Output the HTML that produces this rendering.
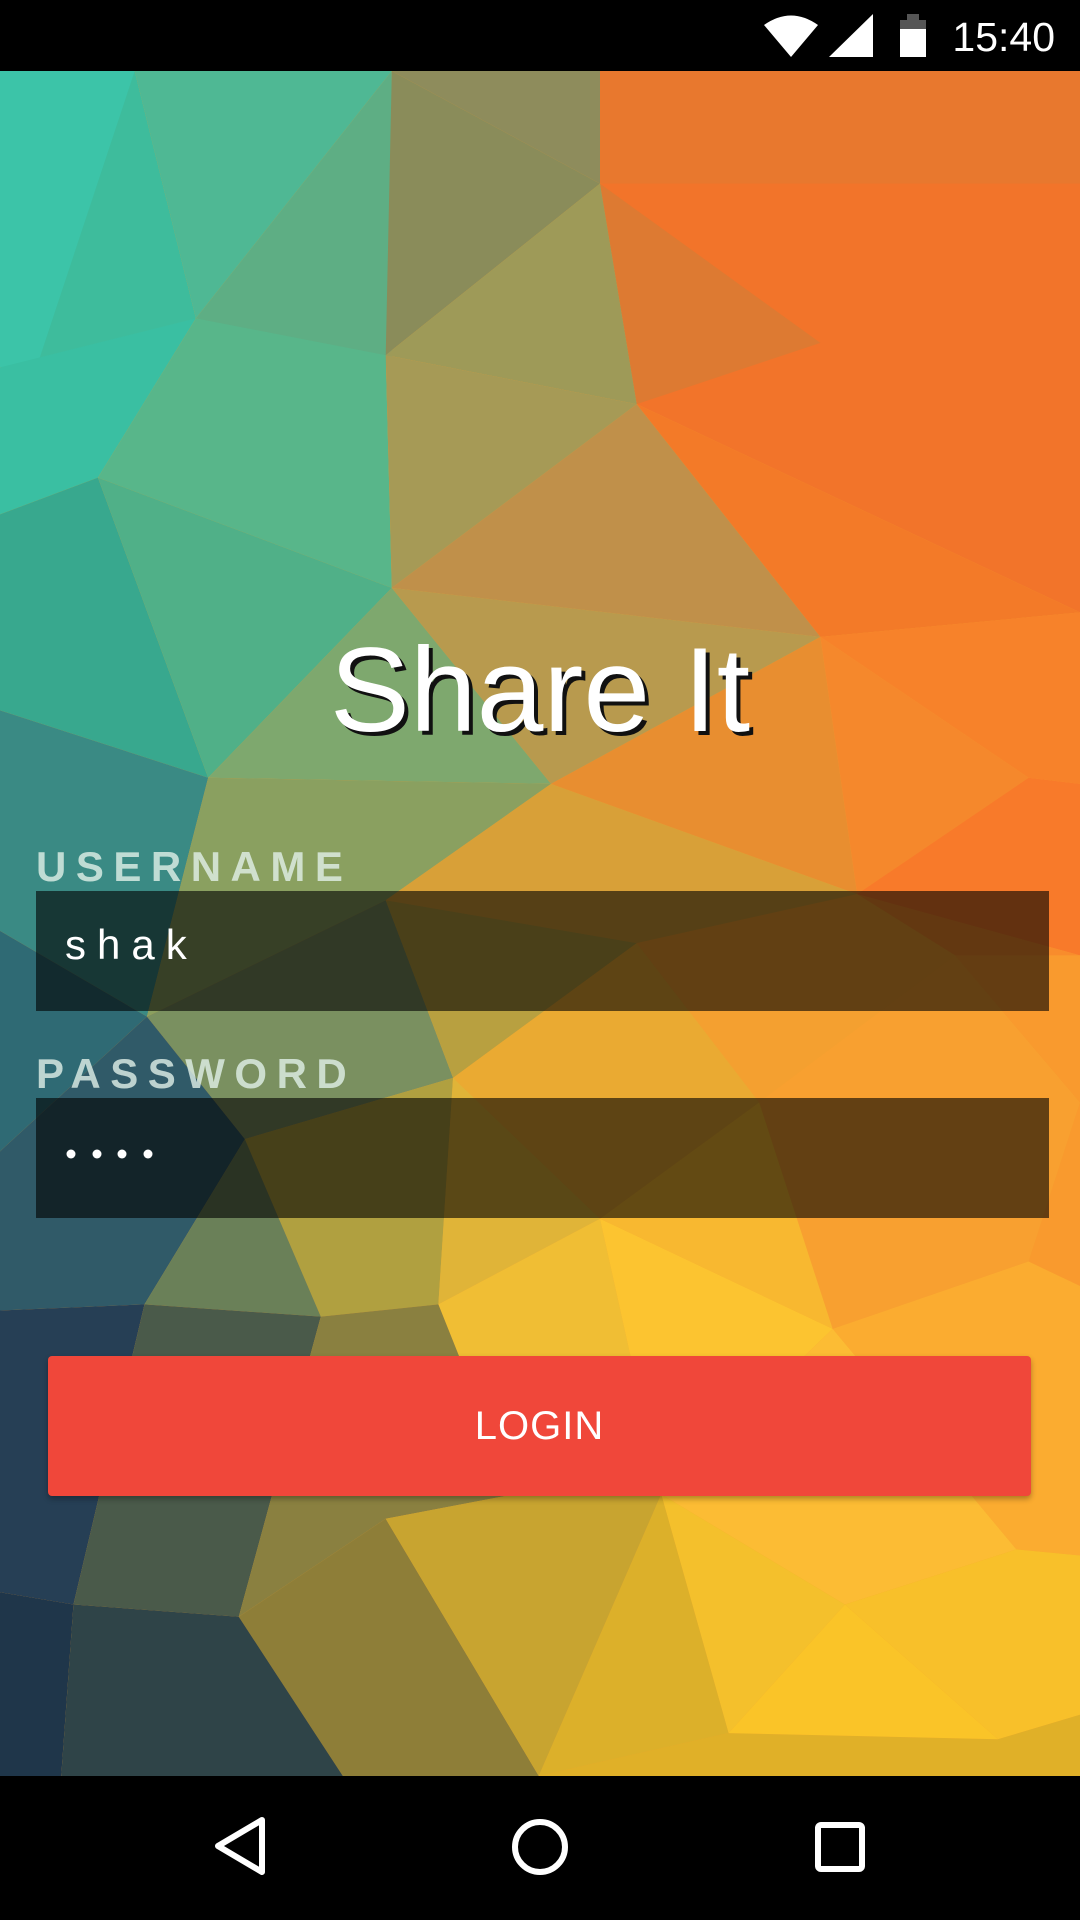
<!DOCTYPE html>
<html><head><meta charset="utf-8"><style>
html,body{margin:0;padding:0;width:1080px;height:1920px;overflow:hidden;background:#000;font-family:"Liberation Sans",sans-serif}
.abs{position:absolute}
.lbl{position:absolute;left:36px;font-weight:bold;font-size:42px;letter-spacing:9.5px;color:rgba(225,240,232,0.8);line-height:1}
.inp{position:absolute;left:36px;width:1013px;height:120px;background:rgba(0,0,0,0.6)}
</style></head><body>
<div class="abs" style="left:0;top:0;width:1080px;height:72px;background:#000"></div>
<svg class="abs" style="left:0;top:0" width="1080" height="72">
<path d="M764 25 Q791 6 818 25 L791 57 Z" fill="#fff"/>
<path d="M829 57 L873 14 L873 57 Z" fill="#fff"/>
<rect x="900" y="20" width="26" height="37" fill="#fff"/>
<rect x="900" y="20" width="26" height="9" fill="#555"/>
<rect x="907" y="14" width="12" height="6" fill="#555"/>
<text x="1055" y="51" text-anchor="end" font-family="Liberation Sans" font-size="41" fill="#fff">15:40</text>
</svg>
<svg class="abs" style="left:0;top:71px" width="1080" height="1705" viewBox="0 58 882 1392" preserveAspectRatio="none">
<rect x="0" y="58" width="882" height="1392" fill="#f5a030"/>
<polygon points="0,58 110,58 110,300 0,300" fill="#3cc4a8"/>
<polygon points="110,58 320,58 160,260" fill="#4fb894"/>
<polygon points="110,58 160,260 0,390" fill="#3ebc9c"/>
<polygon points="320,58 160,260 320,300" fill="#5eae84"/>
<polygon points="320,58 490,58 490,150" fill="#8e8c5c"/>
<polygon points="320,58 490,150 315,290" fill="#8a8c5a"/>
<polygon points="490,58 882,58 882,200 490,150" fill="#e8782e"/>
<polygon points="490,150 882,150 882,500 520,330" fill="#f2742a"/>
<polygon points="490,150 520,330 670,280" fill="#dd7a32"/>
<polygon points="315,290 490,150 520,330" fill="#9e9a58"/>
<polygon points="0,300 160,260 80,390 0,420" fill="#3abfa2"/>
<polygon points="160,260 315,290 320,480 80,390" fill="#58b68a"/>
<polygon points="315,290 520,330 320,480" fill="#a69a56"/>
<polygon points="520,330 670,520 320,480" fill="#c0904a"/>
<polygon points="520,330 882,500 670,520" fill="#f37a28"/>
<polygon points="0,420 80,390 170,635 0,580" fill="#38a88e"/>
<polygon points="80,390 320,480 170,635" fill="#50b088"/>
<polygon points="320,480 450,640 170,635" fill="#7ea86e"/>
<polygon points="320,480 670,520 450,640" fill="#b89a4e"/>
<polygon points="670,520 882,500 882,640 840,635" fill="#f7822a"/>
<polygon points="450,640 670,520 700,730" fill="#e88e30"/>
<polygon points="670,520 840,635 700,730" fill="#f5882c"/>
<polygon points="840,635 882,640 882,780 700,730" fill="#f87a2a"/>
<polygon points="0,580 170,635 120,830 0,760" fill="#3a8a84"/>
<polygon points="170,635 450,640 315,735 120,830" fill="#8aa060"/>
<polygon points="315,735 450,640 700,730 520,770" fill="#d8a038"/>
<polygon points="700,730 882,780 882,900 780,780" fill="#f88c2c"/>
<polygon points="520,770 700,730 780,780 620,900" fill="#f4a030"/>
<polygon points="0,760 120,830 0,940" fill="#2f6a74"/>
<polygon points="120,830 315,735 370,880 200,930" fill="#7a9060"/>
<polygon points="315,735 520,770 370,880" fill="#b8a040"/>
<polygon points="520,770 620,900 490,995 370,880" fill="#eaaa32"/>
<polygon points="620,900 780,780 882,900 840,1030 680,1085" fill="#f8a030"/>
<polygon points="780,780 882,780 882,1050 840,1030 882,900" fill="#f99a2e"/>
<polygon points="490,995 620,900 680,1085" fill="#f8b830"/>
<polygon points="0,940 120,830 200,930 118,1065 0,1070" fill="#305a68"/>
<polygon points="200,930 370,880 358,1065 262,1075" fill="#b0a040"/>
<polygon points="200,930 262,1075 118,1065" fill="#6a8058"/>
<polygon points="370,880 490,995 358,1065" fill="#e0b438"/>
<polygon points="358,1065 490,995 540,1220 420,1220" fill="#f0be34"/>
<polygon points="490,995 680,1085 540,1220" fill="#fcc430"/>
<polygon points="680,1085 840,1030 882,1050 882,1270 830,1265" fill="#fbac30"/>
<polygon points="540,1220 680,1085 830,1265 690,1310" fill="#fcbc34"/>
<polygon points="0,1070 118,1065 60,1310 0,1300" fill="#263f55"/>
<polygon points="118,1065 262,1075 195,1320 60,1310" fill="#4a5a4a"/>
<polygon points="262,1075 358,1065 420,1220 315,1240 195,1320" fill="#8a8040"/>
<polygon points="195,1320 315,1240 440,1450 280,1450" fill="#8e7e38"/>
<polygon points="315,1240 420,1220 540,1220 440,1450" fill="#c8a430"/>
<polygon points="540,1220 690,1310 595,1415" fill="#f4c02c"/>
<polygon points="690,1310 830,1265 882,1270 882,1400 815,1420" fill="#f8c02a"/>
<polygon points="540,1220 595,1415 440,1450" fill="#dcb02a"/>
<polygon points="595,1415 815,1420 882,1400 882,1450 440,1450" fill="#e0b028"/>
<polygon points="690,1310 815,1420 595,1415" fill="#fac428"/>
<polygon points="0,1300 60,1310 50,1450 0,1450" fill="#1f364a"/>
<polygon points="60,1310 195,1320 280,1450 50,1450" fill="#2f4448"/>
</svg>
<div class="abs" style="left:0;top:630px;width:1080px;text-align:center;font-size:120px;color:#fff;line-height:1;text-shadow:4px 4px 0 #111">Share It</div>
<div class="lbl" style="top:846px">USERNAME</div>
<div class="inp" style="top:891px"></div>
<div class="abs" style="left:65px;top:924px;font-size:42px;letter-spacing:11px;color:#fff;line-height:1">shak</div>
<div class="lbl" style="top:1053px">PASSWORD</div>
<div class="inp" style="top:1098px"></div>
<svg class="abs" style="left:0;top:1140px" width="200" height="30"><g fill="#fff"><circle cx="71" cy="14" r="4.5"/><circle cx="97" cy="14" r="4.5"/><circle cx="122" cy="14" r="4.5"/><circle cx="148" cy="14" r="4.5"/></g></svg>
<div class="abs" style="left:48px;top:1356px;width:983px;height:140px;background:#f0473a;border-radius:4px;box-shadow:0 3px 6px rgba(0,0,0,0.3);color:#fff;font-size:40px;text-align:center;line-height:140px;letter-spacing:1px">LOGIN</div>
<div class="abs" style="left:0;top:1776px;width:1080px;height:144px;background:#000"></div>
<svg class="abs" style="left:0;top:1776px" width="1080" height="144">
<path d="M262 44 L218 70 L262 96 Z" fill="none" stroke="#fff" stroke-width="6" stroke-linejoin="round"/>
<circle cx="540" cy="71" r="25" fill="none" stroke="#fff" stroke-width="6"/>
<rect x="818" y="49" width="44" height="44" rx="3" fill="none" stroke="#fff" stroke-width="6"/>
</svg>
</body></html>
